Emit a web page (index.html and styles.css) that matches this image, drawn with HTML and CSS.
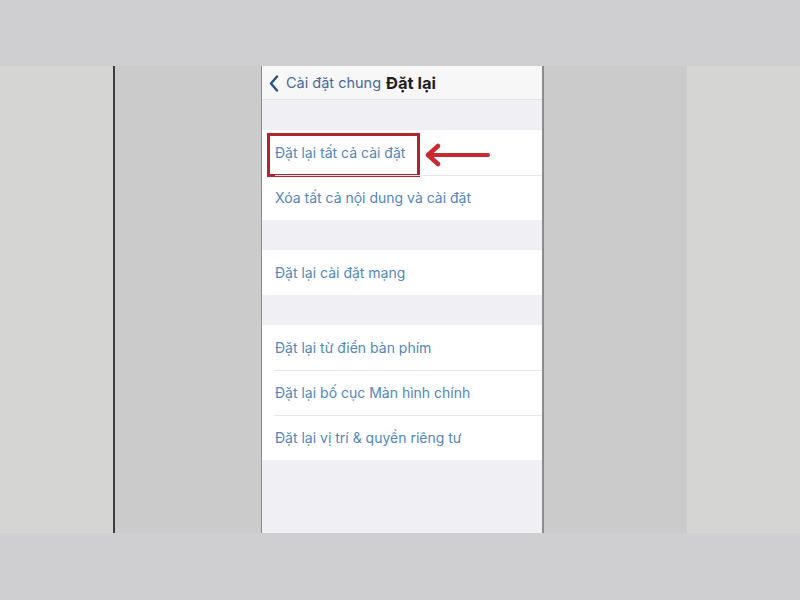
FILE: index.html
```html
<!DOCTYPE html>
<html lang="vi">
<head>
<meta charset="utf-8">
<link rel="stylesheet" href="styles.css">
</head>
<body>
<div class="top-band"></div>
<div class="middle">
  <div class="side side-left"></div>
  <div class="dark-line"></div>
  <div class="gap gap-left"></div>
  <div class="phone">
    <div class="nav">
      <svg class="chevron" width="10" height="17" viewBox="0 0 10 17"><path d="M8 1.5 L2 8.5 L8 15.5" fill="none" stroke="#2f4f86" stroke-width="2.4" stroke-linecap="round" stroke-linejoin="round"/></svg>
      <span class="back">Cài đặt chung</span>
      <span class="title">Đặt lại</span>
    </div>
    <div class="spacer"></div>
    <div class="group">
      <div class="row highlighted">
        <span>Đặt lại tất cả cài đặt</span>
        <div class="red-box"></div>
        <svg class="arrow" width="72" height="24" viewBox="0 0 72 24"><path d="M66 12 L8 12" stroke="#c92a30" stroke-width="4" stroke-linecap="round"/><path d="M16 3 L6 12 L16 21" fill="none" stroke="#c92a30" stroke-width="4.5" stroke-linecap="round" stroke-linejoin="round"/></svg>
      </div>
      <div class="row"><span>Xóa tất cả nội dung và cài đặt</span></div>
    </div>
    <div class="spacer"></div>
    <div class="group">
      <div class="row"><span>Đặt lại cài đặt mạng</span></div>
    </div>
    <div class="spacer"></div>
    <div class="group">
      <div class="row"><span>Đặt lại từ điển bàn phím</span></div>
      <div class="row"><span>Đặt lại bố cục Màn hình chính</span></div>
      <div class="row"><span>Đặt lại vị trí &amp; quyền riêng tư</span></div>
    </div>
    <div class="fill"></div>
  </div>
  <div class="gap gap-right"></div>
  <div class="side side-right"></div>
</div>
<div class="bottom-band"></div>
</body>
</html>
```
FILE: styles.css
```css
html, body {
  margin: 0;
  padding: 0;
  width: 800px;
  height: 600px;
  overflow: hidden;
  background: #cfcfd1;
  font-family: Inter, "Liberation Sans", sans-serif;
}
.top-band { height: 66px; background: #cfcfd1; }
.bottom-band { height: 67px; background: #cfcfd1; }
.middle {
  display: flex;
  height: 467px;
}
.side { background: #d5d5d3; }
.side-left { width: 113px; }
.side-right { width: 113px; }
.dark-line { width: 2px; background: #3c3c3c; }
.gap { background: #cbcbcb; }
.gap-left { width: 146px; }
.gap-right { width: 143px; }
.phone {
  width: 280px;
  border-left: 1px solid #8a8a8a;
  border-right: 2px solid #8c8c8c;
  background: #efeff4;
  display: flex;
  flex-direction: column;
}
.nav {
  height: 33px;
  background: #f7f7f7;
  border-bottom: 1px solid #e2e2e6;
  display: flex;
  align-items: center;
  padding-left: 7px;
}
.chevron { margin-right: 7px; margin-top: 1px; }
.back {
  color: #4a6a9c;
  font-size: 14.5px;
  margin-right: 5px;
}
.title {
  color: #1e1e1e;
  font-size: 16.5px;
  font-weight: 700;
}
.spacer { height: 30px; }
.group { background: #ffffff; }
.row {
  position: relative;
  height: 45px;
  display: flex;
  align-items: center;
  padding-left: 13px;
  color: #5087c0;
  font-size: 14px;
}
.row + .row::before {
  content: "";
  position: absolute;
  left: 13px;
  right: 0;
  top: 0;
  border-top: 1px solid #e6e6ea;
}
.red-box {
  position: absolute;
  left: 5px;
  top: 3px;
  width: 147px;
  height: 38px;
  border: 3px solid #b3242d;
}
.arrow {
  position: absolute;
  left: 160px;
  top: 13px;
}
.fill { flex: 1; background: #efeff4; }
```
